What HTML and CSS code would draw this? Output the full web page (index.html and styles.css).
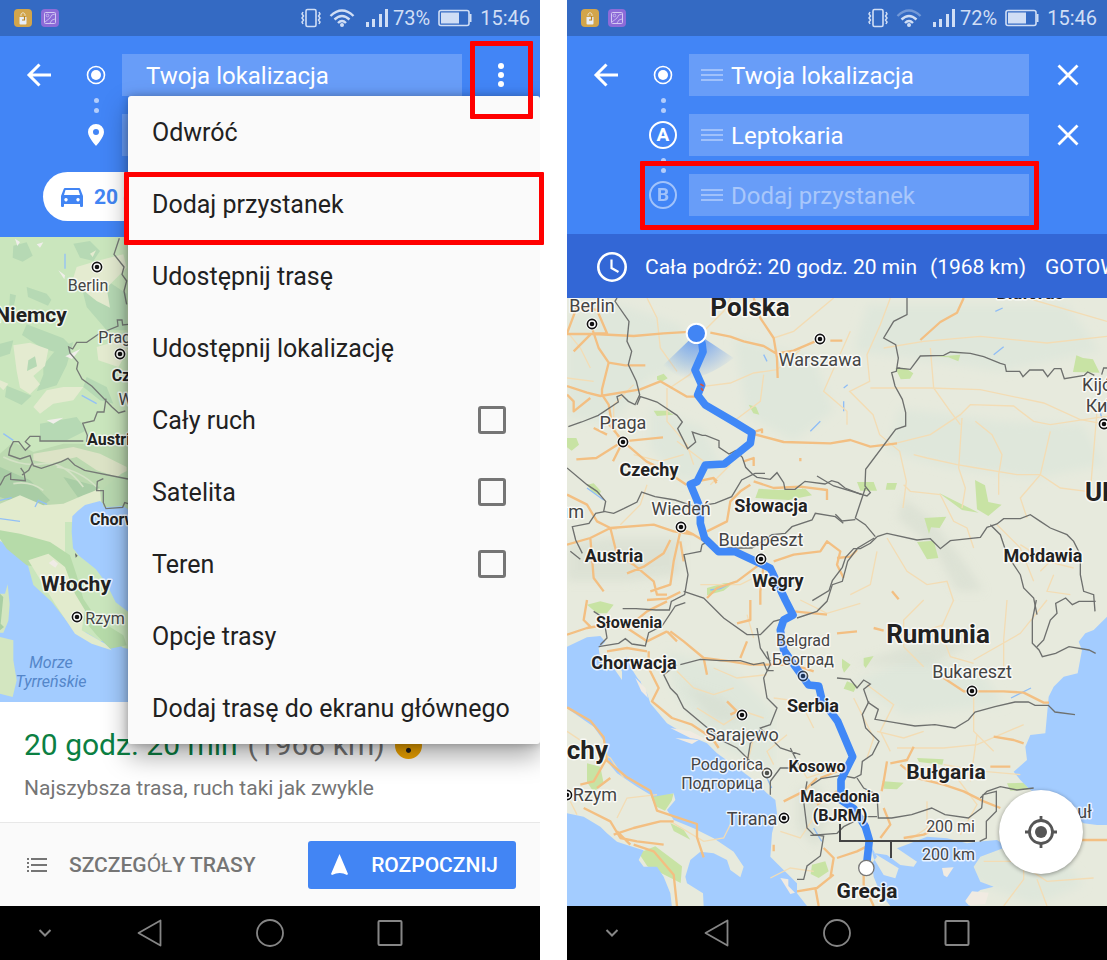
FILE: index.html
```html
<!DOCTYPE html>
<html lang="pl">
<head>
  <meta charset="UTF-8" />
  <meta name="viewport" content="width=device-width, initial-scale=1.0" />
  <title>Dodaj przystanek</title>
  <link rel="stylesheet" href="styles.css">
</head>
<body>

  <!-- shared icons -->
  <svg class="defs" width="0" height="0" aria-hidden="true">
    <symbol id="i-app1" viewBox="0 0 18 18">
      <rect width="18" height="18" rx="4" fill="#d2a54b"/>
      <path d="M5.500 8h7v6.500q0 1-1 1h-5q-1 0-1-1z" fill="#e8eef8"/>
      <path d="M7 7V5q2-3 4 0v2" fill="none" stroke="#e8dcc0" stroke-width="1"/>
      <path d="M10.500 7v4H8" fill="none" stroke="#b98420" stroke-width="1.200"/>
    </symbol>
    <symbol id="i-app2" viewBox="0 0 18 18">
      <rect width="18" height="18" rx="4" fill="#8d6bd8"/>
      <rect x="3.500" y="3.500" width="11" height="11" rx="1" fill="none" stroke="#d3c9f3"/>
      <circle cx="6.500" cy="6.500" r="1.300" fill="none" stroke="#d3c9f3" stroke-width=".7"/>
      <path d="M14 5q-4 0-5 4l-5 4M9 14l2-3 3-1" fill="none" stroke="#d3c9f3" stroke-width=".8"/>
    </symbol>
    <symbol id="i-vibrate" viewBox="0 0 20 20">
      <rect x="5" y="1.500" width="10" height="17" rx="1.500" fill="none" stroke="currentColor" stroke-width="1.600"/>
      <path d="M2 4l-1 2 1.500 2L1 10l1.500 2L1 14l1 2M18 4l1 2-1.500 2 1.500 2-1.500 2 1.500 2-1 2" fill="none" stroke="currentColor" stroke-width="1.500"/>
    </symbol>
    <symbol id="i-wifi" viewBox="0 0 26 20">
      <g fill="none" stroke="currentColor" stroke-width="2.400">
        <path class="wifi-top" d="M1.500 8Q13-3 24.500 8"/>
        <path d="M5.500 11.500q7.500-7 15 0M9 15q4-4 8 0"/>
      </g>
      <circle cx="13" cy="17" r="2" fill="currentColor"/>
    </symbol>
    <symbol id="i-signal" viewBox="0 0 22 20">
      <path d="M0 14h3v5H0zM6 11h3v8H6zM13 6h3v13h-3zM19 1h3v18h-3z" fill="currentColor"/>
    </symbol>
    <symbol id="i-battery" viewBox="0 0 34 18">
      <rect x="1" y="1.500" width="30" height="15" rx="2" fill="none" stroke="currentColor" stroke-width="1.600"/>
      <path d="M3 3.500h18v11H3z" fill="currentColor"/>
      <path d="M32.500 5v8" stroke="currentColor" stroke-width="2"/>
    </symbol>
    <symbol id="i-back" viewBox="0 0 26 26">
      <path d="M25 13H3M13.500 2.500L3 13l10.500 10.500" fill="none" stroke="#fff" stroke-width="3"/>
    </symbol>
    <symbol id="i-origin" viewBox="0 0 20 20">
      <circle cx="10" cy="10" r="8.500" fill="none" stroke="#fff" stroke-width="1.600"/>
      <circle cx="10" cy="10" r="5" fill="#fff"/>
    </symbol>
    <symbol id="i-pin" viewBox="0 0 16 22">
      <path fill-rule="evenodd" fill="#fff" d="M8 0a8 8 0 0 0-8 8c0 5.500 8 14 8 14s8-8.500 8-14a8 8 0 0 0-8-8zm0 5a3 3 0 1 1 0 6 3 3 0 0 1 0-6z"/>
    </symbol>
    <symbol id="i-drag" viewBox="0 0 22 14">
      <path d="M0 2h22M0 7h22M0 12h22" stroke="#b3cdfb" stroke-width="1.600"/>
    </symbol>
    <symbol id="i-close" viewBox="0 0 22 22">
      <path d="M1.500 1.500l19 19M20.500 1.500l-19 19" stroke="#fff" stroke-width="2.800"/>
    </symbol>
    <symbol id="i-dots" viewBox="0 0 6 26">
      <circle cx="3" cy="4" r="3" fill="#fff"/><circle cx="3" cy="13" r="3" fill="#fff"/><circle cx="3" cy="22" r="3" fill="#fff"/>
    </symbol>
    <symbol id="n-down" viewBox="0 0 14 10"><path d="M1.500 2L7 7.500 12.500 2" fill="none" stroke="#868686" stroke-width="2"/></symbol>
    <symbol id="n-back" viewBox="0 0 28 28"><path d="M24.500 1.500v25L2.500 14z" fill="none" stroke="#868686" stroke-width="1.800" stroke-linejoin="round"/></symbol>
    <symbol id="n-home" viewBox="0 0 28 28"><circle cx="14" cy="14" r="13" fill="none" stroke="#868686" stroke-width="1.800"/></symbol>
    <symbol id="n-recent" viewBox="0 0 28 28"><rect x="2.500" y="2" width="23" height="24" rx="1" fill="none" stroke="#868686" stroke-width="2"/></symbol>
    <symbol id="city" viewBox="0 0 14 14">
      <circle cx="7" cy="7" r="6.500" fill="#fff" opacity=".8"/>
      <circle cx="7" cy="7" r="4.600" fill="#fff" stroke="#111" stroke-width="1.600"/>
      <circle cx="7" cy="7" r="2.300" fill="#111"/>
    </symbol>
  </svg>

  <main class="phones">

    <!-- route screen with open menu -->
    <section class="phone">
      <div class="screen">
        <div class="status">
          <svg class="app"><use href="#i-app1"/></svg>
          <svg class="app"><use href="#i-app2"/></svg>
          <div class="status-right">
            <svg class="vibrate"><use href="#i-vibrate"/></svg>
            <svg class="wifi"><use href="#i-wifi"/></svg>
            <svg class="signal"><use href="#i-signal"/></svg>
            <span class="percent">73%</span>
            <svg class="battery"><use href="#i-battery"/></svg>
            <span>15:46</span>
          </div>
        </div>

        <header class="search compact">
          <div class="stops">
            <button class="icon-btn" aria-label="Wstecz"><svg class="i26"><use href="#i-back"/></svg></button>
            <div class="markers">
              <div class="marker"><svg class="i20"><use href="#i-origin"/></svg></div>
              <div class="link"><i></i><i></i></div>
              <div class="marker"><svg class="pin"><use href="#i-pin"/></svg></div>
            </div>
            <div class="fields">
              <div class="field wide"><input type="text" value="Twoja lokalizacja" aria-label="Punkt startowy"></div>
              <div class="field wide"><input type="text" aria-label="Cel"></div>
            </div>
            <div class="actions">
              <button class="icon-btn" aria-label="Więcej opcji"><svg class="dots"><use href="#i-dots"/></svg></button>
            </div>
          </div>
          <button class="mode">
            <svg width="22" height="20" viewBox="0 0 22 20"><path fill-rule="evenodd" fill="#4285f4" d="M4 1h14q1 0 1.300 1L22 9v10q0 1-1 1h-1q-1 0-1-1v-2H3v2q0 1-1 1H1q-1 0-1-1V9l2.700-7Q3 1 4 1zm.5 2L3 8h16l-1.500-5zM5 11a1.700 1.700 0 1 0 .01 0zm12 0a1.700 1.700 0 1 0 .01 0z"/></svg>
            20 godz.
          </button>
        </header>

        <div class="map">
          <svg viewBox="0 0 540 465">
            <svg width="540" height="465" viewBox="0 0 1620 1395">
              <rect width="1620" height="1395" fill="#cae6bd"/>
              <g fill="#b6d9b4">
                <path d="M40 26l40-10 18 40-30 18-30-12zM80 150l60 20 14 18-10 18-60-26zM30 170l18 5-6 30-14 0zM80 262l110 42 20 20-14 30-70-20-60-40zM130 385l40-50 50-20-20 70-30 60-60 18 20-50zM0 320l40-10-10 40-30 10zM20 446l75 30-30 28-50-24zM220 20l50-8 30 30-20 30-40-10zM240 130l50-20 90 60v110l-60 0-60-70zM260 420l60 30 20 50-40-10-50-40zM120 560l110-20 30 40-60 30-80 0z"/>
              </g>
              <g fill="#e4ebd0">
                <path d="M230 90l60-18 80-20 10 40-60 60 10 60-40-20-50-40-20-30zM40 325l50-8 55 20-10 50-35 30 20 25-30 30-30-20-10-50zM140 460l50-10 60 0-30 40-60 10-40 30-20-20zM0 430l25 10-15 20-10-10zM290 330l70-20 25 30-30 50-60-20zM270 50l18-10-10 20z"/>
              </g>
              <path d="M85 370l20-12 6 30-30 14z" fill="#b6d9b4"/>
              <path d="M45 5l15 10-8 12zM110 22l20-6-10 16zM175 100l20 15-2 12zM140 550l50-8-30 18zM196 358l45-22-25 30z" fill="#f0eeea"/>
              <!-- alps -->
              <path d="M0 650l40-35 60 30 90-25 70 0 140-20V820L260 800l-90 30L0 800z" fill="#bcd9b0"/>
              <path d="M100 650l120-20 80 20 80 40v40l-90-30-60-40-80 20-50-10z" fill="#dce3c6"/>
              <path d="M0 690l90 40 60 60-40 30-110-40zM190 720l110 30-60 40z" fill="#a9cda5"/>
              <path d="M10 660q60 30 120 20t120 70M40 740q50-10 90 20M170 690q70 10 120 60" fill="none" stroke="#d4e2c6" stroke-width="5"/>
              <!-- po valley -->
              <path d="M0 800l60-25 70 30 60-5 60-25 50-20 5 60-50 20-30 20-30 0 0 100-90-30-145-10z" fill="#e2ebcd"/>
              <!-- sea -->
              <path d="M1620 800H400l-20 6-60 4-20-18-45 12-22 18-16 16-2 46 4 50 18 22 50 40 30 40 30 60 55 42 30 30v400h1200z" fill="#a3ccff"/>
              <path d="M304 760l60-50 40-20v140l-36-24-58 4z" fill="#b9d9b0"/>
              <path d="M0 912l40 20 38 32 22 80 55 50 35 45 30 38 40 10 40 25 48-2 20 22 50 10 20 30H400v150H0z" fill="#a3ccff"/>
              <path d="M0 880l60 10 90 25 60 40 20 60 20 70 40 60 80 50 10 30-50 10-40-40-50-60-40-80-60-60-60-10-60-50-20-30z" fill="#b6dba9"/>
              <path d="M85 970l60-20 50 40 30 80 30 50-10 60 70 40 20 20-60-20-50-30-60-90z" fill="#e2ebcd"/>
              <path d="M160 968l14 12-8 12-20-14z" fill="#f0ebe6"/>
              <path d="M0 1070l15 0 8-28 6 60-4 50-15 35H0zM0 1200l40 10 0 60 10 60-12 50-38-10z" fill="#d3e6c0"/>
              <path d="M0 1070l10 10-8 80 10 10-12 10z" fill="#a9cfa4"/>
              <path d="M0 790l35-8M0 845l60 8M105 810l10-20 26 12M245 475l45 25M10 590l30 20 M195 50l0 45" stroke="#93c0f6" stroke-width="4" fill="none"/>
              <path d="M225 948l8 8-6 6z" fill="#666"/>
              <!-- borders -->
              <path d="M358 4l-16 48 30 38-6 22 14 20-8 30 8 40M384 262l-16 2-2-15-14 0 2 18-58 24-36 25-30 0-12 20-12-6 4 18 24 28-4 20 16 30 30 22 60 62 20 18 20-6M318 485l-6 40-20 0-10 26-34 8 14 36-2 20M250 612l-130 0 0-14-30 0-14 16 14 12-14 14-20-26-16 0-10 20-4 20 34 12 30-10 10 30 24 8 60-20 20-10 20 20 30 16 130 26M66 714l20-14 10-20M0 745l14-26 18-10 0 18 44 4-4-24-10-14M310 725l-18 8-2 28 20 0 0 36 8 18 50-4 6-14 20 6" fill="none" stroke="#767a76" stroke-width="4"/>
            </svg>
            <g class="city">
              <use href="#city" x="90" y="23" width="14" height="14"/>
              <text x="88" y="54" class="small">Berlin</text>
              <use href="#city" x="113" y="110" width="14" height="14"/>
              <text x="119" y="106" class="small">Praga</text>
              <text x="145" y="168" class="small">Wiedeń</text>
              <use href="#city" x="70" y="373" width="14" height="14"/>
              <text x="105" y="387" class="small">Rzym</text>
            </g>
            <g class="country">
              <text x="138" y="144" class="small">Czechy</text>
              <text x="113" y="208" class="small">Austria</text>
              <text x="128" y="288" class="small">Chorwacja</text>
            </g>
            <g class="land">
              <text x="31" y="85" class="mid">Niemcy</text>
              <text x="76" y="354" class="mid">Włochy</text>
            </g>
            <g class="water">
              <text x="51" y="431">Morze</text>
              <text x="51" y="450">Tyrreńskie</text>
            </g>
          </svg>
        </div>

        <div class="summary">
          <p class="time"><strong>20 godz. 20 min</strong> <span>(1968 km)</span> <i class="warn"></i></p>
          <p class="note">Najszybsza trasa, ruch taki jak zwykle</p>
        </div>
        <div class="bottom">
          <button class="details">
            <svg width="20" height="16" viewBox="0 0 20 16"><path d="M0 2h2M0 6h2M0 10h2M0 14h2M4 2h16M4 8h16M4 14h16" stroke="#757575" stroke-width="2"/></svg>
            <span>SZCZEG<span class="thin">ÓŁ</span>Y TRASY</span>
          </button>
          <button class="start">
            <svg width="17" height="21" viewBox="0 0 17 21"><path d="M8.500 0L17 20l-1 1q-7-4-15 0l-1-1z" fill="#fff"/></svg>
            ROZPOCZNIJ
          </button>
        </div>
        <nav class="navbar">
          <button aria-label="Ukryj"><svg class="down"><use href="#n-down"/></svg></button>
          <button aria-label="Wstecz"><svg><use href="#n-back"/></svg></button>
          <button aria-label="Ekran główny"><svg><use href="#n-home"/></svg></button>
          <button aria-label="Ostatnie"><svg><use href="#n-recent"/></svg></button>
        </nav>

        <div class="menu">
          <button>Odwróć</button>
          <button>Dodaj przystanek</button>
          <button>Udostępnij trasę</button>
          <button>Udostępnij lokalizację</button>
          <label for="traffic">Cały ruch <input type="checkbox" id="traffic"></label>
          <label for="satellite">Satelita <input type="checkbox" id="satellite"></label>
          <label for="terrain">Teren <input type="checkbox" id="terrain"></label>
          <button>Opcje trasy</button>
          <button>Dodaj trasę do ekranu głównego</button>
        </div>
      </div>
      <div class="mark mark-dots"></div>
      <div class="mark mark-item"></div>
    </section>

    <!-- adding a stop -->
    <section class="phone">
      <div class="screen">
        <div class="status">
          <svg class="app"><use href="#i-app1"/></svg>
          <svg class="app"><use href="#i-app2"/></svg>
          <div class="status-right">
            <svg class="vibrate"><use href="#i-vibrate"/></svg>
            <svg class="wifi" viewBox="0 0 26 20">
              <g fill="none" stroke="currentColor" stroke-width="2.400">
                <path d="M1.500 8Q13-3 24.500 8" opacity=".4"/>
                <path d="M5.500 11.500q7.500-7 15 0M9 15q4-4 8 0"/>
              </g>
              <circle cx="13" cy="17" r="2" fill="currentColor"/>
            </svg>
            <svg class="signal"><use href="#i-signal"/></svg>
            <span class="percent">72%</span>
            <svg class="battery"><use href="#i-battery"/></svg>
            <span>15:46</span>
          </div>
        </div>

        <header class="search">
          <div class="stops">
            <button class="icon-btn" aria-label="Wstecz"><svg class="i26"><use href="#i-back"/></svg></button>
            <div class="markers">
              <div class="marker"><svg class="i20"><use href="#i-origin"/></svg></div>
              <div class="link"><i></i><i></i></div>
              <div class="marker"><b>A</b></div>
              <div class="link"><i></i><i></i></div>
              <div class="marker"><b class="empty">B</b></div>
            </div>
            <div class="fields">
              <div class="field"><svg class="drag"><use href="#i-drag"/></svg><input type="text" value="Twoja lokalizacja" aria-label="Punkt startowy"></div>
              <div class="field"><svg class="drag"><use href="#i-drag"/></svg><input type="text" value="Leptokaria" aria-label="Przystanek A"></div>
              <div class="field"><svg class="drag"><use href="#i-drag"/></svg><input type="text" placeholder="Dodaj przystanek" aria-label="Przystanek B"></div>
            </div>
            <div class="actions">
              <button class="icon-btn" aria-label="Usuń"><svg class="i22"><use href="#i-close"/></svg></button>
              <button class="icon-btn" aria-label="Usuń"><svg class="i22"><use href="#i-close"/></svg></button>
            </div>
          </div>
        </header>
        <div class="trip">
          <svg width="30" height="30" viewBox="0 0 30 30"><circle cx="15" cy="15" r="13.700" fill="none" stroke="#fff" stroke-width="2.600"/><path d="M14.500 7.500V16l7 4" fill="none" stroke="#fff" stroke-width="2.200"/></svg>
          <span>Cała podróż: 20 godz. 20 min</span>
          <span>(1968 km)</span>
          <button>GOTOWE</button>
        </div>

        <div class="map">
          <svg viewBox="0 0 540 608">
            <defs>
              <radialGradient id="beam" cx="388" cy="106" r="140" gradientUnits="userSpaceOnUse">
                <stop offset="0" stop-color="#4285f4" stop-opacity=".8"/>
                <stop offset="1" stop-color="#4285f4" stop-opacity="0"/>
              </radialGradient>
              <filter id="soft"><feGaussianBlur stdDeviation="14"/></filter>
            </defs>
            <svg width="540" height="608" viewBox="0 0 1620 1824">
              <rect width="1620" height="1824" fill="#e7eadd"/>
              <g fill="#dfe7db" filter="url(#soft)">
                <path d="M0 60l160-40 180 60 60 120-150 40-120 140L0 360zM250 330l160 60 60 130-130 30-90-100zM500 120l240 60 60 160-120 90-140-80zM900 20l600 0 100 140-300 60-280-40-160-20zM1000 330l300 40 250 10 60 120-200 40-260-30-190-50zM300 1060l200 60 120 120 0 180-180-80-120-160zM860 1150l200-80 190 60 60 90-300 30zM1130 1720l140-80 200 20 80 100-150 60z"/>
              </g>
              <g fill="#d3dacd" filter="url(#soft)" opacity=".5">
                <path d="M0 740l120-20 220 0 0 110-160 20L0 850zM1010 600l80 60 100 130 60 90-80 0-70-130-110-90zM860 1100l200-70 160 0-120 70zM690 1480l60-30 40 100-40 100-60-60zM350 1160l120 40 60 70-90 0z"/>
              </g>
              <!-- parks -->
              <g fill="#c8e3a4">
                <path d="M270 235l20-8 12 14-18 10-14-6zM545 320l22 6 10 24-18-4zM0 420l28 0 8 20-22 18-14-10zM60 560l20-4 22 24-6 12-20-10zM260 338l40 0 20 12-50 4zM575 572l60 4 80-4 20 20-70 14-100-6zM420 870l50-14 30-2-30 24-50 14zM985 210l30 0 24 16-10 16-28 2zM1106 176l74-6-6 20-30-12zM1528 172l20 8 30 4 20 40-80-2zM1224 546l30 16 10 50 40 8-40 34-34-20zM1115 584l60 30 60 30-50-8zM1072 660l66-4-20 34-26-2-6 20zM1050 732l50-4 14 52-34 4zM870 552l50 0 10 26-50 0zM960 555l30 0-6 20-28 0zM60 920l40-10 40 10-20 26-30 0zM250 1490l70-4-6 22-20 30-30-14zM60 1396l40 10 10 50-30 26-20-30zM215 1665l50-20 80 60-4 50-40-20-60-30zM310 1575l40 20 20 30-50-26zM1050 1380l80 4-4 16-70-8zM950 1450l60 4-20 20-40-2zM1320 1456l50-2 20 20-60 4zM840 1150l30 12-10 20-30-10zM825 1082l26 18-20 24-6-16zM890 1080l30-6-24 36-6-8zM735 1700l40-10 10 30-30 20-24-12zM700 560l14 8-8 4z"/>
              </g>
              <!-- sea -->
              <g fill="#a3ccff">
                <path d="M0 1046l60-28 40-4 15 17-20 20 5 35 20 35 10-25 35 50 0-25-10-30 25-15 10 30 50 80 10 30 50 60 50 30 70 30 30 30 70 50 40 30 40 40 25 20 5 40-15 60-5 70 40 40 40 40 0 30 30 38H410l-2-38-48-30-5-20 15-50 30-25 40 5 40 20 10 30 30 22 10-32-30-45-60-40-60-30-60-25-20-30 25-30-5-20-60 10-50-30-60-40-25-30-10-60-35-50L0 1231z"/>
                <path d="M0 1546l50 10 50 30 20 20 30 25 60 20 20 6-15 29 15 20 40 0 20 30 20 50 8 68H0z"/>
                <path d="M1620 956l-40 40-25 10-20 25 10 25-13 70-42 10-30 30-15 30-10 110-45 5-15 35 5 40-40 35 20 25 30 30 60 30 100 70 40 5h30z"/>
                <path d="M910 1641l20 35-15 20 5 40 20 50 30 38h240l-15-13 45-35 40-10-40-15-20-45 20-30 80-30-30-20-60 5-30 5-60-15-60-5-50 20-40 15 60 40-10 15-40-5-40-30-40-6 75 46-10 30-35-10-30-50z"/>
                <path d="M200 1130l20 20 20 50-25-20z"/>
              </g>
              <path d="M1125 1710l35-2-20 30-10-6zM1195 1808l20-28 50 4-10 34-50 4zM310 1290l60 10 60 30-60-10zM325 1320l70 6-20 12zM640 1740l24 4 0 20 20 20-14 4zM205 1140l30 30 8 30-20-20z" fill="#f1ebe2"/>
              <g fill="none" stroke="#8fbdf6" stroke-width="4">
                <path d="M430 876l30-4 40-20M1590 300l14 60M1332 1200l60-30M600 1440l14 30M740 1590l24 40M1285 40l22-10M1280 170l30-24M830 270l12-10M830 310l0 30M590 170l10 20M60 570l50 36M760 370l-30 30"/>
              </g>
              <!-- minor roads -->
              <g fill="none" stroke="#f3dcb4" stroke-width="4">
                <path d="M240 0l30 60 10 90 50 70M410 100l60-60 20-40M408 170l-40 60-60 40M410 265l80-10 70-30 70-10 70-60M300 270l0 100 60 70 20 60M500 370l80-60 10-80M800 0l-120 100-60 20M970 0l-30 80-40 90 8 80-60 30 70 70 20 60 60 50 20 90-10 80M850 100l-80 180 70 60 0 40M950 150l120-20 170-15 200 20 180-20M910 270l180 0 150 5 190 40 110 50 80 14M1380 0l240 70M1090 150l10 120 50 70 30 40M970 440l120-30 90-60 30-30 130 4 60 46 50 10 200-30M1040 470l40 10 90 20 60 10 120 20 70 0 60 40 80 10M1185 360l-10 150 20 60-10 60M1225 370l50 40 30 60-10 60 0 60M1450 400l-30 130-60 70 20 60M1590 340l-20 240M1010 560l20 20 90 10 40 80 40 20 20 60M930 760l-20 100-60 30M960 720l60 100 60 40 60-10 20 60M1290 680l70 70 40 100M1360 740l80 50 80 20M1420 820l60-60M1460 830l-20 50 70 10"/>
                <path d="M1070 906l-60 60 0 80 60 60M1160 906l-40 90 30 80 70 20M1320 906l-10 120 0 90M1440 906l-80 100-140 80M960 1010l80 0 90-30M1220 1180l0 120 60 60M900 1160l80 60-40 80 30 60M990 1350l140 0 100-10 140-60M1170 1440l60 80-50 90M1230 1310l-20 140M930 1300l80 20 60-20M1130 1400l120 20 110 10M860 1200l60 120-20 60M1250 1690l100 0 90 60 140-10M1310 1824l60-80 0-60M1440 1824l-30-80M1080 1510l0 80-60 40M560 1020l-20-70M440 1110l70 30 90-10M330 1120l50 50 60 20 60-20M390 1230l80 50 60-40 60 20M560 1320l-20 80M0 1300l60 40 70 40 40 60M150 1560l30-60 90-10M10 1510l20 40M500 1560l-30 60-60 10-100-60M640 1600l60 20 40-60M690 1390l30 50 60-20M620 1400l-20-40 60-50M610 1740l60-30 70 10M0 240l80 10M0 100l40 50 30 60M160 440l-20-60 0-60 60-60M200 470l80 20 70-20M330 430l80 60M430 560l60-60M240 560l-20 60-60 60M400 860l120 0 80-40M620 1200l80 10 40 80M700 906l80 40 100-30"/>
              </g>
              <!-- motorways -->
              <g class="road">
                <path d="M0 108l80 0 120 6 90-8 100-6M430 104l60 12 40 14 60 14 40 24M560 0l20 60 40 60 10 60 2 60M630 166l50-8 70-30M790 128h36M1060 126l60-54 50-28 20-44M75 90l20 60 30 44 50 8 60 0M20 160l50-50M125 194l-20 80 0 20M0 264l60 20 40 10 120-20 60-24 80 46 30 0M0 290l20 20 0 30 50-40M105 290l20 30 10 60M0 106l30-80 60 10 30 70-40 0M555 404l30-10 0 12M560 408l90 24 140 4 60-10 60 20 80-10M168 430l-50-60M168 430l60-6 60-6M168 430l-80 50-60 4M168 430l-30 60M168 430l70 60 60 30 60 40M80 390l40 20M390 550l50-10 8 16M440 540l10 10M700 490l0-10M530 490l30-10 0 24M0 590l60 30 30 50 40 20 130-10 60 20 60 10M0 740l70-20 60-30 20 0M130 690l20 80 50 30 60 50 10 40 30 0M340 700l-20 90-10 70-60 20M340 690l40 20 40 24M420 700l60-30 10-60 30-30 30-20M560 550l60 20 80-4 80 10 0 30M620 790l60-20 80-10 20-30 40 30-10 40 20 40M590 800l-10 80 0 40M590 790l-80 60-60 20-30 30M70 720l10 120 30 40M180 826l50-20 60-40 20-40M340 730l10 60"/>
                <path d="M0 1010l60-20 60-10 60 10 60-50 60-30M60 906l-10 60 20 20M240 906l60-4 40-20M310 1000l40 30 60 50 80 10 60 10 130 0 60 20M180 990l60 40 60-30M300 1000l30 30M240 1060l-60-10-60 10M245 1060l0 50 30 60-20 40 60 50 60 20 60 40 20 30M680 940l100 10M550 906l0 60-40 10M520 1080l20-50M480 1210l30 30-20 10M410 1080l10 50"/>
                <path d="M0 1228l70 40 40 50 10 70 60 50 70 40 20 60 60 20 60 20 0 40 20 60M120 1380l-40 70-40 10M130 1440l-40 30M50 1530l80 40 30 50 50 10 80 10M140 1610l60-20 80-20 40 0M200 1640l60 20 60 70 10 94M150 1600l40 40M650 1510l60-30 40-40M810 1420l-50 20M810 1480l-60 40M620 1640v20M690 1780l60-10 50-40M745 1770l10 54M770 1650l30 30-10 60"/>
                <path d="M810 1680l60-20 40-20M890 1720l0 40 30 64M810 1006l60-6M920 990l30 8M810 780l40-4 20-20M975 880l20 24M1130 1140l60 40 120 0 60 4 60 30 16 0M1280 1316l60 10 30 10M1000 1400l50 40 80 20 60 20 60 30 50 20M970 1396l50-10 20-40M960 1390l-10 60-6 30M1270 1406l60 0M940 1620l30-40-20-50M1010 1620l60-10 40-20M1540 1626h80"/>
              </g>
              <!-- borders -->
              <g fill="none" stroke="#6e706e" stroke-width="4">
                <path d="M150 0l-6 10 42 60-6 60 14 30-10 40 24 50 10 40-14 30-20-10-20-20-14 6 4 16-60 40-50 20-40 14M210 320l10-24 20 6 30 10 60 40 16 20-14 20 30 60 24-20-10-30 30 10 10 0 40 16 0 20 30 20 20-10 20 20 10 30 20 20 14 10 40 6 20-20 20 30 4 20 30 0 30-24 60 8 20-10 20 6 20 16 50 20"/>
                <path d="M0 510l60 50 30 20 26 30-6 30 30 6 30-14 40-20 14-30 40 14 60 10 60 20 60-10 50-20 30-50 40-20 30 0M116 640l-30 6-20 30-50 10 10 40 20 40M10 760l30 24M405 740l-4 20-50 10 12 60-10 60-40 20-6 26-40 0-60-4-40 0M405 740l20-10 20 30 40-10 70 0 60-40 40-4 20-20 60-20 10-20 60 10 24 20M350 880l60 20 60 60 70 50 40 0 40-40 60-16 0 0M690 960l60-20 30-30 16-50 30-10 16-60 30-40 50-30"/>
                <path d="M1020 0l0 50-40 20-30 50 36 20 8 40-6 40-14 4 10 40 22 40 10 40 0 40-30 10-90 120-2 50 16 20-10 10-100-30-50-30M1000 210l-10 0 40 4 30-40 70-2 20-10 60 4 40 10 50 20 14 4 4 20 40 0 10 16 20-20 40 0 14 20 20-24 20 0 10 30 60-10 10-10 20 10M1604 230l6-20 10 0M895 570l-10 30-20 60 30 20 30 36M865 665l-40 4-20-20M930 716l-20 20-30 16-20 0-24 26-10 30-30 40-10 30-50 30M930 716l30-10 90 20 40-4 30 30 30-24 90-10 20-30 30-10 20-16 50 0 30-12 30 20 30 20 50 20 20 20 20 40 0 60 10 50 30 10 4 50M1270 680l30 30 20 60 40 60 10 40 30 30 10 50"/>
                <path d="M1408 906l-12 60 0 70 20 20 10 20 40-10 40-20 60 10 20 10M1410 1046l20-20 20-60 20-20-4-30 30-16 20 20 20-10 50 0M810 1140l40 4 20 26 20-24 20 12-20 16 14 40 30 20-10 30 60 10 60 10 60-4 60 10 40-24 20-24 60-16 60-14 40 0 20 10 40 0 20 20 60 8"/>
                <path d="M906 1210l-20 40 10 40 40 40-20 40-30 20-4 40-20 10-40-8-60 10-30 20M870 1440l20 30 40 20 4 70 40 0 60-10 60-20 40 20 70 10 40-30 4-40 40-10 0 60-30 30 0 50-20 10M1240 1500l20-20 40-14 50 10 50-6M720 1450l-10 60 10 80 20 20 30 4-10 60-40 30-10 40-20 0M730 1612l80-6 20-20 60-30 40 0M700 1370l-60-20-60-60 30-10 20-50-30-30-10-60 20-40-10-40M340 1100l60-16 60 4 60 0 40 12 30-6 10 24 20 0M330 1100l-40 30 20 40 20 20 20 40 60 50 60 50 40 20 40 40M540 1396l10-60 30-40M610 1490l0-40 30-40 60 0-30-60M570 990l10 60 20 30 10 10M95 1046l60-10 20-14 20 16 40 6 10-40 40-20 40-60 30-10M80 940l30 20 10 60-20 20"/>
              </g>
              <path d="M388 106L270 220q100 60 230-40z" fill="url(#beam)"/>
              <path class="route" d="M388 106l17 30 3 25-24 55 20 45-12 30 23 30 85 50 55 33-5 32-78 62-57 3-25 50-20 8 30 72v45l13 45 42 40h50l105 50 45 95 23 45-28 15-10 30 10 60 35 50 40 55 30 3 10 42 47 64 45 106-35 70v60l38 25 35 55 12 40-9 80"/>
              <path d="M400 258l10 6M402 270l6 8" stroke="#d8543c" stroke-width="5"/>
              <circle cx="388" cy="106" r="29" fill="#4285f4" stroke="#fff" stroke-width="6"/>
              <circle cx="898" cy="1710" r="23" fill="#fff" stroke="#777" stroke-width="4"/>
            </svg>

            <g class="city">
              <use href="#city" x="18" y="19" width="14" height="14"/>
              <text x="25" y="14">Berlin</text>
              <use href="#city" x="246" y="34" width="14" height="14"/>
              <text x="253" y="68">Warszawa</text>
              <use href="#city" x="49" y="137" width="14" height="14"/>
              <text x="56" y="131">Praga</text>
              <use href="#city" x="107" y="222" width="14" height="14"/>
              <text x="114" y="217">Wiedeń</text>
              <use href="#city" x="187" y="254" width="14" height="14"/>
              <text x="194" y="248">Budapeszt</text>
              <text x="17" y="220" class="end">Monachium</text>
              <use href="#city" x="530" y="119" width="14" height="14"/>
              <text x="537" y="93">Kijów</text>
              <text x="537" y="114">Київ</text>
              <use href="#city" x="229" y="371" width="14" height="14" opacity=".7"/>
              <text x="236" y="348" class="small">Belgrad</text>
              <text x="236" y="367" class="small">Београд</text>
              <use href="#city" x="168" y="410" width="14" height="14"/>
              <text x="175" y="443">Sarajewo</text>
              <use href="#city" x="193" y="468" width="14" height="14" opacity=".7"/>
              <text x="160" y="472" class="small">Podgorica</text>
              <text x="155" y="491" class="small">Подгорица</text>
              <use href="#city" x="210" y="513" width="14" height="14"/>
              <text x="185" y="527">Tirana</text>
              <use href="#city" x="-7" y="490" width="14" height="14"/>
              <text x="28" y="503">Rzym</text>
              <use href="#city" x="398" y="386" width="14" height="14"/>
              <text x="405" y="380">Bukareszt</text>
              <text x="525" y="520" class="end">Stambuł</text>
            </g>
            <g class="country">
              <text x="82" y="178">Czechy</text>
              <text x="204" y="214">Słowacja</text>
              <text x="211" y="289">Węgry</text>
              <text x="47" y="264">Austria</text>
              <text x="463" y="1">Białoruś</text>
              <text x="476" y="264">Mołdawia</text>
              <text x="62" y="330" class="small">Słowenia</text>
              <text x="67" y="371">Chorwacja</text>
              <text x="246" y="414">Serbia</text>
              <text x="250" y="474" class="small">Kosowo</text>
              <text x="273" y="504" class="small">Macedonia</text>
              <text x="273" y="523" class="small">(BJRM)</text>
              <text x="379" y="481" class="mid">Bułgaria</text>
              <text x="300" y="600" class="mid">Grecja</text>
            </g>
            <g class="land">
              <text x="183" y="18">Polska</text>
              <text x="371" y="345">Rumunia</text>
              <text x="41" y="461" class="end">Włochy</text>
              <text x="518" y="203" class="begin">Ukraina</text>
            </g>
            <path d="M273 526v17h135M324 543v17" fill="none" stroke="#444" stroke-width="2"/>
            <g class="scale">
              <text x="408" y="534">200 mi</text>
              <text x="408" y="562">200 km</text>
            </g>
          </svg>
          <button class="locate" aria-label="Moja lokalizacja">
            <svg width="34" height="34" viewBox="0 0 34 34"><circle cx="17" cy="17" r="11.500" fill="none" stroke="#555" stroke-width="2.800"/><circle cx="17" cy="17" r="6" fill="#555"/><path d="M17 1v5M17 28v5M1 17h5M28 17h5" stroke="#555" stroke-width="2.800"/></svg>
          </button>
        </div>
        <nav class="navbar">
          <button aria-label="Ukryj"><svg class="down"><use href="#n-down"/></svg></button>
          <button aria-label="Wstecz"><svg><use href="#n-back"/></svg></button>
          <button aria-label="Ekran główny"><svg><use href="#n-home"/></svg></button>
          <button aria-label="Ostatnie"><svg><use href="#n-recent"/></svg></button>
        </nav>
      </div>
      <div class="mark mark-stop"></div>
    </section>

  </main>
</body>
</html>
```
FILE: styles.css
```css
* {
  box-sizing: border-box;
}
body {
  margin: 0;
  background: #fff;
  font-family: Roboto, "Noto Sans", sans-serif;
  color: #212121;
}
button, input {
  font: inherit;
  color: inherit;
  border: none;
  background: none;
  padding: 0;
  margin: 0;
}
button {
  cursor: pointer;
}
p {
  margin: 0;
}
svg {
  display: block;
  flex: none;
}
.defs {
  position: absolute;
}

.phones {
  display: grid;
  grid-template-columns: 1fr 1fr;
  gap: 27px;
}
.phone {
  position: relative;
  min-width: 0;
}
.screen {
  position: relative;
  overflow: hidden;
}

/* status bar */
.status {
  display: flex;
  align-items: center;
  gap: 9px;
  height: 36px;
  padding: 0 10px 0 14px;
  background: #346ac3;
  color: #d0def5;
  font-size: 20px;
}
.status-right {
  display: flex;
  align-items: center;
  gap: 8px;
  margin-left: auto;
}
.app { width: 18px; height: 18px; }
.vibrate { width: 20px; height: 20px; }
.wifi { width: 26px; height: 20px; }
.signal { width: 22px; height: 20px; margin-left: 3px; }
.battery { width: 34px; height: 18px; }
.percent { margin-left: -3px; }

/* header */
.search {
  padding: 18px 0;
  background: #4285f6;
  color: #fff;
}
.search.compact {
  padding-bottom: 16px;
}
.stops {
  display: flex;
  align-items: flex-start;
}
.icon-btn {
  display: flex;
  justify-content: center;
  align-items: center;
  width: 78px;
  height: 42px;
}
.i26 { width: 26px; height: 26px; }
.i22 { width: 22px; height: 22px; }
.i20 { width: 20px; height: 20px; }
.pin { width: 16px; height: 22px; }
.dots { width: 6px; height: 26px; }
.drag { width: 22px; height: 14px; }

.markers {
  width: 36px;
  margin-right: 8px;
}
.marker {
  display: flex;
  justify-content: center;
  align-items: center;
  height: 42px;
}
.marker b {
  width: 28px;
  height: 28px;
  border: 2px solid #fff;
  border-radius: 50%;
  font-size: 19px;
  line-height: 24px;
  text-align: center;
}
.marker .empty {
  opacity: 0.5;
}
.link {
  display: flex;
  flex-direction: column;
  justify-content: center;
  align-items: center;
  gap: 5px;
  height: 18px;
}
.link i {
  width: 5px;
  height: 5px;
  border-radius: 50%;
  background: #b3cdfb;
}
.fields, .actions {
  display: flex;
  flex-direction: column;
  gap: 18px;
}
.fields {
  flex: 1;
  min-width: 0;
}
.actions {
  width: 78px;
}
.field {
  display: flex;
  align-items: center;
  gap: 8px;
  height: 42px;
  padding: 0 12px;
  background: #689df8;
}
.field.wide {
  padding: 0 24px;
}
.field input {
  flex: 1;
  min-width: 0;
  height: 42px;
  padding-top: 2px;
  font-size: 24px;
  outline: none;
}
.field input::placeholder {
  color: #a8c7fb;
  opacity: 1;
}

.mode {
  display: flex;
  align-items: center;
  gap: 11px;
  height: 49px;
  margin: 16px 0 0 43px;
  padding: 0 24px 0 18px;
  border-radius: 25px;
  background: #fff;
  color: #4285f4;
  font-size: 21px;
  font-weight: 700;
}

.trip {
  display: flex;
  align-items: center;
  height: 64px;
  padding: 2px 0 0 30px;
  background: #3367d6;
  color: #fff;
  font-size: 21px;
  white-space: nowrap;
  overflow: hidden;
}
.trip span {
  margin-right: 13px;
}
.trip svg {
  margin-right: 18px;
}
.trip button {
  margin-left: 6px;
}

/* maps */
.map {
  position: relative;
  overflow: hidden;
}
.map > svg {
  width: 100%;
  height: auto;
}
.map text {
  text-anchor: middle;
  paint-order: stroke;
  stroke: rgba(255,255,255,0.75);
  stroke-width: 3px;
  stroke-linejoin: round;
}
.map .end { text-anchor: end; }
.map .begin { text-anchor: start; }
.city {
  font-size: 18px;
  fill: #444;
}
.country {
  font-size: 18px;
  font-weight: 700;
  fill: #222;
}
.land {
  font-size: 26px;
  font-weight: 700;
  fill: #222;
}
.small { font-size: 16px; }
.mid { font-size: 21px; }
.map .water text {
  font-size: 16px;
  font-style: italic;
  fill: #5486c9;
  stroke: none;
}
.map .scale text {
  font-size: 16px;
  fill: #444;
  text-anchor: end;
}
.road {
  fill: none;
  stroke: #f3bf82;
  stroke-width: 7;
  stroke-linejoin: round;
}
.route {
  fill: none;
  stroke: #4088f7;
  stroke-width: 23;
  stroke-linejoin: round;
}
.locate {
  position: absolute;
  right: 24px;
  bottom: 32px;
  display: flex;
  justify-content: center;
  align-items: center;
  width: 84px;
  height: 84px;
  border-radius: 50%;
  background: #fff;
  box-shadow: 0 1px 4px rgba(0,0,0,0.4);
}

/* route summary */
.summary {
  height: 120px;
  padding: 23px 24px 0;
  background: #fff;
}
.time {
  display: flex;
  align-items: center;
  gap: 10px;
  font-size: 30px;
  line-height: 40px;
  color: #757575;
}
.time strong {
  font-weight: 400;
  color: #0b8043;
}
.warn {
  width: 27px;
  height: 27px;
  border-radius: 50%;
  background: radial-gradient(circle at 50% 68%, #222 2px, #f2a600 3px);
}
.note {
  margin-top: 9px;
  font-size: 21px;
  line-height: 28px;
  color: #757575;
}
.bottom {
  display: flex;
  justify-content: space-between;
  align-items: center;
  height: 84px;
  padding: 0 24px 0 27px;
  border-top: 1px solid #e8e8e8;
  background: #fafafa;
  font-size: 21px;
  font-weight: 500;
}
.details, .start {
  display: flex;
  align-items: center;
  height: 48px;
}
.details {
  gap: 22px;
  color: #757575;
}
.thin {
  font-weight: 400;
}
.start {
  gap: 23px;
  padding: 0 18px 0 23px;
  border-radius: 3px;
  background: #4285f4;
  color: #fff;
}

.navbar {
  display: grid;
  grid-template-columns: 3fr 4fr 4fr 4fr 3fr;
  height: 54px;
  background: #000;
}
.navbar button {
  display: flex;
  justify-content: center;
  align-items: center;
}
.navbar svg {
  width: 28px;
  height: 28px;
}
.navbar .down {
  width: 14px;
  height: 10px;
}

/* drop-down menu over the screen */
.menu {
  position: absolute;
  top: 96px;
  left: 128px;
  right: 0;
  border-radius: 3px;
  background: #fafafa;
  box-shadow: 0 12px 26px rgba(0,0,0,0.35), 0 0 8px rgba(0,0,0,0.25);
}
.menu button, .menu label {
  display: flex;
  justify-content: space-between;
  align-items: center;
  width: 100%;
  height: 72px;
  padding: 0 34px 0 24px;
  font-size: 25px;
  text-align: left;
  white-space: nowrap;
}
.menu button {
  padding-right: 0;
}
.menu input {
  appearance: none;
  width: 28px;
  height: 28px;
  border: 3px solid #757575;
  border-radius: 3px;
}

/* red frames */
.mark {
  position: absolute;
  border: 5px solid #f00;
  border-radius: 1px;
  pointer-events: none;
}
.mark-dots {
  top: 41px;
  right: 7px;
  width: 63px;
  height: 78px;
}
.mark-item {
  top: 172px;
  left: 124px;
  right: -4px;
  height: 73px;
}
.mark-stop {
  top: 161px;
  left: 73px;
  right: 68px;
  height: 69px;
}
```
